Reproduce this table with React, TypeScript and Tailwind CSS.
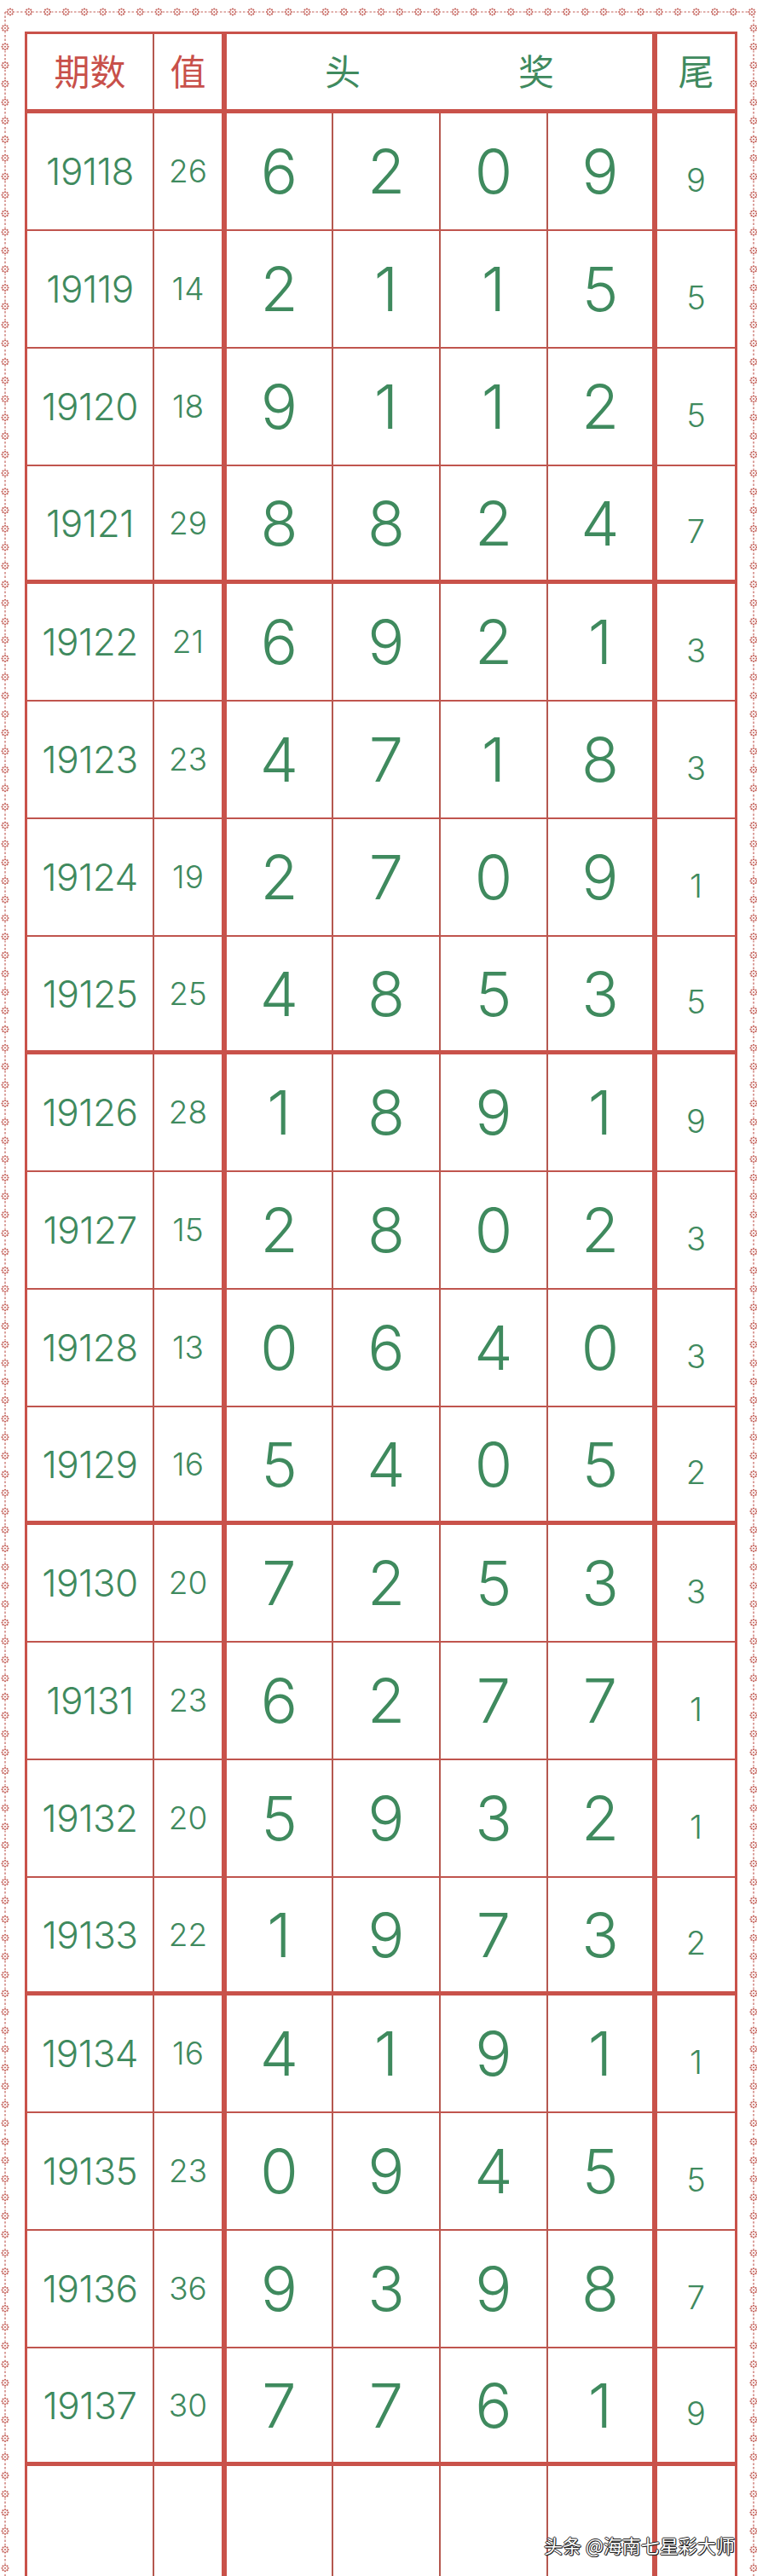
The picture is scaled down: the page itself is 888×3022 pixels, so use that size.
import React from "react";

const rows: [string, string, string, string][] = [
  ["19118", "26", "6209", "9"],
  ["19119", "14", "2115", "5"],
  ["19120", "18", "9112", "5"],
  ["19121", "29", "8824", "7"],
  ["19122", "21", "6921", "3"],
  ["19123", "23", "4718", "3"],
  ["19124", "19", "2709", "1"],
  ["19125", "25", "4853", "5"],
  ["19126", "28", "1891", "9"],
  ["19127", "15", "2802", "3"],
  ["19128", "13", "0640", "3"],
  ["19129", "16", "5405", "2"],
  ["19130", "20", "7253", "3"],
  ["19131", "23", "6277", "1"],
  ["19132", "20", "5932", "1"],
  ["19133", "22", "1973", "2"],
  ["19134", "16", "4191", "1"],
  ["19135", "23", "0945", "5"],
  ["19136", "36", "9398", "7"],
  ["19137", "30", "7761", "9"],
];

const font = { fontFamily: 'Inter, "Noto Sans CJK SC", sans-serif' };

function Flower() {
  return (
    <g>
      <circle cx="0" cy="0" r="5.2" fill="#fff" />
      {[0, 45, 90, 135, 180, 225, 270, 315].map((a) => (
        <circle
          key={a}
          cx={Math.cos((a * Math.PI) / 180) * 3.5}
          cy={Math.sin((a * Math.PI) / 180) * 3.5}
          r="1.1"
          fill="#c4625b"
        />
      ))}
      <circle cx="0" cy="0" r="1" fill="#c4625b" />
    </g>
  );
}

function Frame() {
  const step = 21.75;
  const top = Array.from({ length: 41 }, (_, i) => 12 + i * step);
  const side = Array.from({ length: 140 }, (_, i) => 33 + i * step);
  return (
    <svg className="absolute inset-0 pointer-events-none" width="888" height="3022">
      <g stroke="#c4625b" strokeWidth="1.2" strokeDasharray="2.5 2">
        <line x1="6" y1="14" x2="884" y2="14" />
        <line x1="6" y1="14" x2="6" y2="3022" />
        <line x1="884" y1="14" x2="884" y2="3022" />
      </g>
      {top.map((x) => (
        <g key={"t" + x} transform={`translate(${x},14)`}>
          <Flower />
        </g>
      ))}
      {side.map((y) => (
        <g key={"l" + y} transform={`translate(6,${y})`}>
          <Flower />
        </g>
      ))}
      {side.map((y) => (
        <g key={"r" + y} transform={`translate(884,${y})`}>
          <Flower />
        </g>
      ))}
    </svg>
  );
}

function DataRow({ row, thick }: { row: [string, string, string, string]; thick: boolean }) {
  const [issue, value, digits, tail] = row;
  const d = digits.split("");
  return (
    <div
      className={`flex h-[138px] ${thick ? "border-b-[5px] border-[#c9524a]" : "border-b-2 border-[#c0554e]"}`}
    >
      <div className="w-[149px] border-r-2 border-[#b5584f] flex items-center justify-center text-[44px] font-light text-[#3f8a5e] tracking-[-0.5px]">
        {issue}
      </div>
      <div className="w-[85px] border-r-[6px] border-[#c9524a] flex items-center justify-center text-[37px] font-light text-[#3f8a5e]">
        {value}
      </div>
      <div className="w-[125px] border-r-2 border-[#b5584f] flex items-center justify-center text-[72px] font-light text-[#3f8a5e]">
        {d[0]}
      </div>
      <div className="w-[126px] border-r-2 border-[#b5584f] flex items-center justify-center text-[72px] font-light text-[#3f8a5e]">
        {d[1]}
      </div>
      <div className="w-[126px] border-r-2 border-[#b5584f] flex items-center justify-center text-[72px] font-light text-[#3f8a5e]">
        {d[2]}
      </div>
      <div className="w-[128px] border-r-[6px] border-[#c9524a] flex items-center justify-center text-[72px] font-light text-[#3f8a5e]">
        {d[3]}
      </div>
      <div className="w-[91px] flex items-center justify-center pt-5 text-[38px] font-light text-[#3f8a5e]">
        {tail}
      </div>
    </div>
  );
}

export default function App() {
  return (
    <div className="relative w-[888px] h-[3022px] overflow-hidden bg-white" style={font}>
      <Frame />
      <div className="relative pl-[29px] pt-[37px]">
        <div className="w-[836px] border-t-[3px] border-x-[3px] border-[#c9524a]">
          {/* header */}
          <div className="flex h-[93px] border-b-[5px] border-[#c9524a]">
            <div className="w-[149px] border-r-2 border-[#b5584f] flex items-center justify-center text-[42px] text-[#c8504a]">
              期数
            </div>
            <div className="w-[85px] border-r-[6px] border-[#c9524a] flex items-center justify-center text-[42px] text-[#c8504a]">
              值
            </div>
            <div className="w-[505px] border-r-[6px] border-[#c9524a] flex items-center justify-center gap-[185px] text-[42px] text-[#3f8a5e]">
              <span>头</span>
              <span>奖</span>
            </div>
            <div className="w-[91px] flex items-center justify-center text-[42px] text-[#3f8a5e]">
              尾
            </div>
          </div>
          {rows.map((r, i) => (
            <DataRow key={r[0]} row={r} thick={i % 4 === 3} />
          ))}
          {/* empty row */}
          <div className="flex h-[200px]">
            <div className="w-[149px] border-r-2 border-[#b5584f]" />
            <div className="w-[85px] border-r-[6px] border-[#c9524a]" />
            <div className="w-[125px] border-r-2 border-[#b5584f]" />
            <div className="w-[126px] border-r-2 border-[#b5584f]" />
            <div className="w-[126px] border-r-2 border-[#b5584f]" />
            <div className="w-[128px] border-r-[6px] border-[#c9524a]" />
            <div className="w-[91px]" />
          </div>
        </div>
      </div>
      <div
        className="absolute left-[638px] top-[2971px] text-[22px] leading-[28px] text-white whitespace-nowrap"
        style={{ fontFamily: '"Noto Sans CJK SC", sans-serif', textShadow: "-1px 0 #222, 1px 0 #222, 0 -1px #222, 0 1px #222, 1px 1px #222" }}
      >
        头条 @海南七星彩大师
      </div>
    </div>
  );
}
